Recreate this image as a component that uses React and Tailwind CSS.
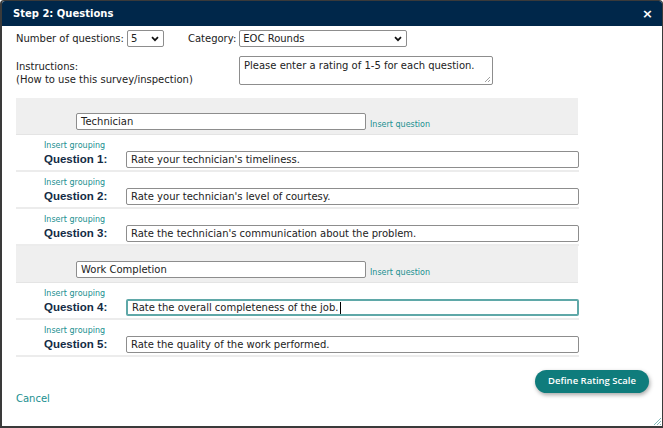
import React from "react";

const teal = "text-[#1a8f8f]";

function GroupRow({ value }) {
  return (
    <div className="bg-[#efefef] h-[37px] flex items-end pb-[4px] pl-[60px] border-b border-[#e4e4e4]">
      <div className="w-[290px] h-[17px] bg-white border border-[#8d8d8d] rounded-[2px] flex items-center pl-[4px] text-[10px] text-[#222]">
        {value}
      </div>
      <span className={`ml-[4px] mb-[-1px] text-[8px] ${teal}`}>Insert question</span>
    </div>
  );
}

function QuestionRow({ n, text, focused }) {
  return (
    <div className="h-[37px] border-b-2 border-[#ececec] pl-[28px] pt-[6px] w-[563px]">
      <div className={`text-[8px] leading-[10px] ${teal}`}>Insert grouping</div>
      <div className="flex items-center">
        <span className="w-[82px] font-['Liberation_Sans',Arial,sans-serif] font-bold text-[11.5px] text-[#142b45]">
          Question {n}:
        </span>
        <div
          className={`w-[453px] h-[17px] bg-white rounded-[2px] flex items-center pl-[4px] text-[10px] text-[#222] ${
            focused ? "border-2 border-[#5fa8a8]" : "border border-[#8d8d8d]"
          }`}
        >
          {text}
          {focused && <span className="w-px h-[12px] bg-black ml-px" />}
        </div>
      </div>
    </div>
  );
}

function ChevronDown() {
  return (
    <svg width="8" height="6" viewBox="0 0 8 6" className="shrink-0">
      <path d="M1 1.2l3 3 3-3" stroke="#111" strokeWidth="1.7" fill="none" />
    </svg>
  );
}

export default function App() {
  return (
    <div className="w-[663px] h-[428px] bg-white font-['DejaVu_Sans',Verdana,sans-serif] overflow-hidden">
      <div className="w-[663px] h-[428px] border border-[#3a3a3a] border-l-2 border-b-2 rounded-t-[4px] flex flex-col relative">
        <div className="h-[25px] bg-[#00274a] rounded-t-[3px] flex items-center justify-between pl-[11px] pr-[9px]">
          <span className="text-white font-bold text-[10px]">Step 2: Questions</span>
          <span className="text-white font-bold text-[13px] leading-none">×</span>
        </div>

        <div className="pl-[14px] pt-[4px] flex flex-col">
          <div className="flex items-center h-[17px] text-[10px] text-[#222]">
            <span>Number of questions:</span>
            <div className="ml-[3px] w-[37px] h-[17px] border border-[#8d8d8d] rounded-[2px] flex items-center justify-between pl-[3px] pr-[4px]">
              <span>5</span>
              <ChevronDown />
            </div>
            <span className="ml-[24px]">Category:</span>
            <div className="ml-[3px] w-[168px] h-[17px] border border-[#8d8d8d] rounded-[2px] flex items-center justify-between pl-[3px] pr-[4px]">
              <span>EOC Rounds</span>
              <ChevronDown />
            </div>
          </div>

          <div className="flex mt-[9px] text-[10px] text-[#222]">
            <div className="w-[223px] pt-[5px] leading-[12.5px]">
              <div>Instructions:</div>
              <div>(How to use this survey/inspection)</div>
            </div>
            <div className="relative w-[254px] h-[29px] border border-[#8d8d8d] rounded-[2px] pl-[4px] pt-[1px]">
              Please enter a rating of 1-5 for each question.
              <svg width="7" height="7" viewBox="0 0 7 7" className="absolute right-[1px] bottom-[1px]">
                <path d="M6 1L1 6M6 4L4 6" stroke="#888" strokeWidth="0.8" />
              </svg>
            </div>
          </div>

          <div className="w-[562px] mt-[12px] flex flex-col">
            <GroupRow value="Technician" />
            <QuestionRow n={1} text="Rate your technician's timeliness." />
            <QuestionRow n={2} text="Rate your technician's level of courtesy." />
            <QuestionRow n={3} text="Rate the technician's communication about the problem." />
            <GroupRow value="Work Completion" />
            <QuestionRow n={4} text="Rate the overall completeness of the job." focused />
            <QuestionRow n={5} text="Rate the quality of the work performed." />
          </div>

          <div className="flex justify-end pr-[13px] mt-[13px]">
            <button className="w-[114px] h-[23px] rounded-full bg-[#0f7c7c] text-white font-['Open_Sans',sans-serif] font-semibold text-[9.5px] shadow-[1px_2px_4px_rgba(0,0,0,0.35)]">
              Define Rating Scale
            </button>
          </div>
          <div className={`leading-[12px] text-[10px] ${teal}`}>Cancel</div>
        </div>

        <svg width="9" height="9" viewBox="0 0 9 9" className="absolute right-0 bottom-0">
          <path d="M8 1L1 8M8 4L4 8M8 7L7 8" stroke="#6aa" strokeWidth="0.8" />
        </svg>
      </div>
    </div>
  );
}
